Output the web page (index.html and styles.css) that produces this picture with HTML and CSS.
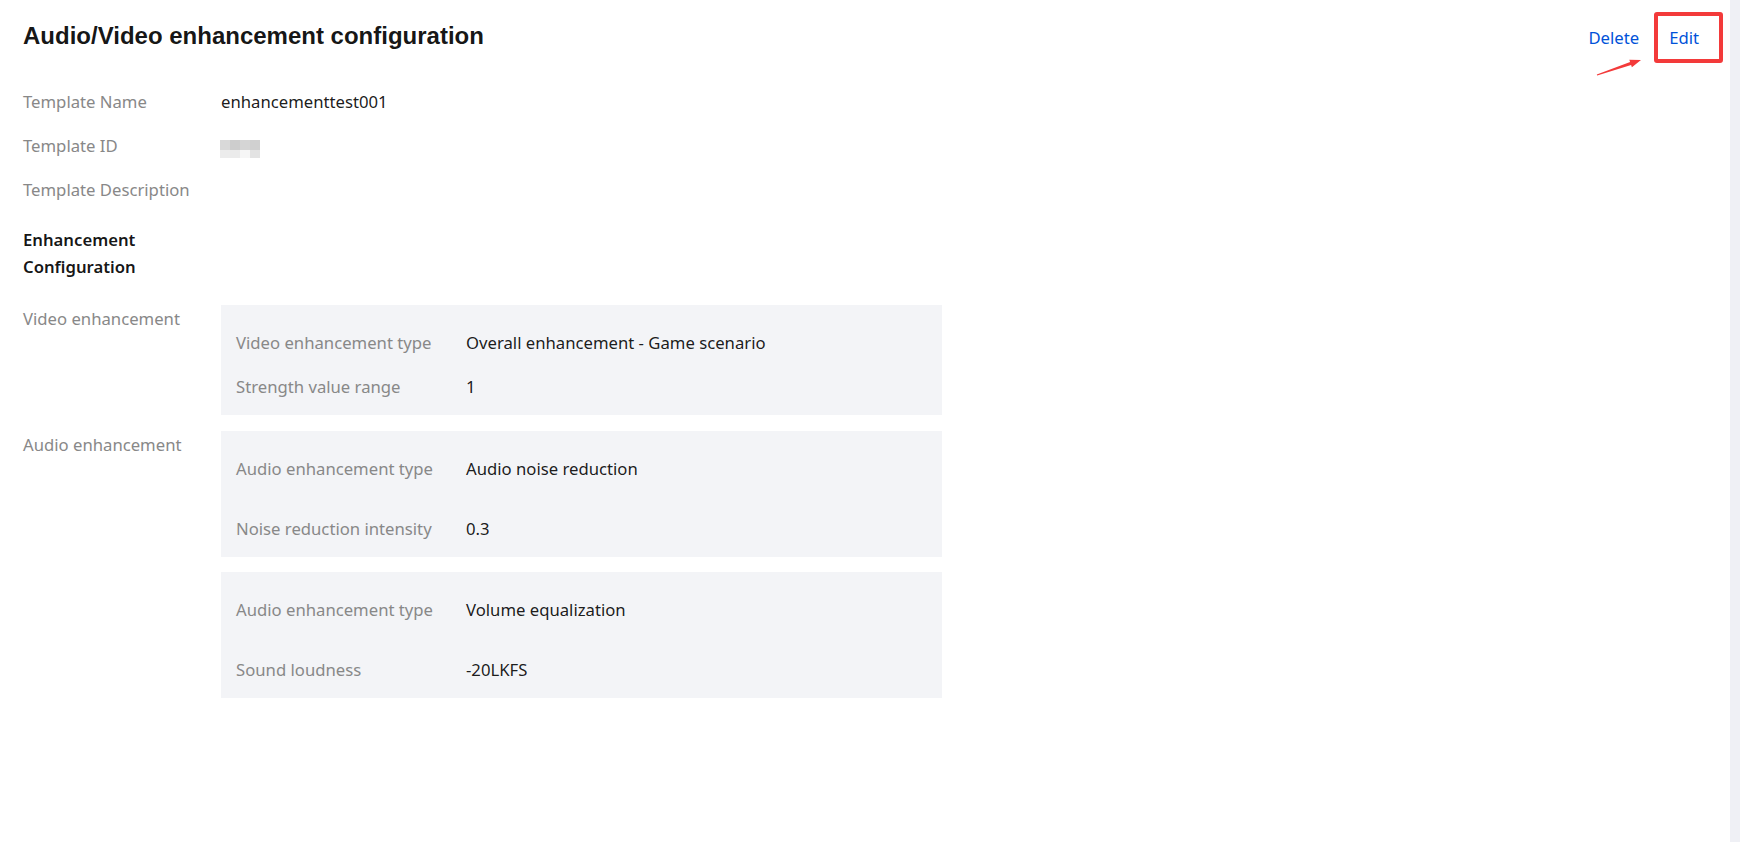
FILE: index.html
```html
<!DOCTYPE html>
<html lang="en">
<head>
<meta charset="utf-8">
<title>Audio/Video enhancement configuration</title>
<link rel="stylesheet" href="styles.css">
</head>
<body>
<div class="layout">
  <main class="page">
    <header class="header">
      <h1 class="title">Audio/Video enhancement configuration</h1>
      <div class="actions">
        <a class="link" href="#">Delete</a>
        <a class="link" href="#">Edit</a>
      </div>
      <span class="annot-box"></span>
      <svg class="annot-arrow" width="50" height="22" viewBox="0 0 50 22" aria-hidden="true">
        <polygon points="2.8,18.4 36.1,6 35.3,3.8 47,4 37.9,11.3 37.1,9.1 3.2,19.6" fill="#f33a3a"/>
      </svg>
    </header>

    <div class="info">
      <div class="row">
        <div class="label">Template Name</div>
        <div class="value">enhancementtest001</div>
      </div>
      <div class="row">
        <div class="label">Template ID</div>
        <div class="value">
          <span class="mosaic"><i class="c1"></i><i class="c2"></i><i class="c3"></i><i class="c4"></i><i class="c5"></i><i class="c6"></i><i class="c7"></i><i class="c8"></i></span>
        </div>
      </div>
      <div class="row">
        <div class="label">Template Description</div>
        <div class="value"></div>
      </div>
      <div class="row row--section">
        <div class="label label--strong">Enhancement Configuration</div>
      </div>
      <div class="row row--group">
        <div class="label label--group">Video enhancement</div>
        <div class="boxes">
          <div class="box">
            <div class="kv"><span class="kv-label">Video enhancement type</span><span class="kv-value">Overall enhancement - Game scenario</span></div>
            <div class="kv"><span class="kv-label">Strength value range</span><span class="kv-value">1</span></div>
          </div>
        </div>
      </div>
      <div class="row row--group row--audio">
        <div class="label label--group">Audio enhancement</div>
        <div class="boxes">
          <div class="box box--tall">
            <div class="kv"><span class="kv-label">Audio enhancement type</span><span class="kv-value">Audio noise reduction</span></div>
            <div class="kv"><span class="kv-label">Noise reduction intensity</span><span class="kv-value">0.3</span></div>
          </div>
          <div class="box box--tall">
            <div class="kv"><span class="kv-label">Audio enhancement type</span><span class="kv-value">Volume equalization</span></div>
            <div class="kv"><span class="kv-label">Sound loudness</span><span class="kv-value">-20LKFS</span></div>
          </div>
        </div>
      </div>
    </div>
  </main>
  <div class="scrollbar"></div>
</div>
</body>
</html>
```

FILE: styles.css
```css
html, body {
  margin: 0;
  padding: 0;
  background: #ffffff;
}

body {
  font-family: "Noto Sans", "Open Sans", sans-serif;
  font-size: 16.7px;
  color: rgba(0, 0, 0, 0.9);
}

.layout {
  display: flex;
  height: 100vh;
  overflow: hidden;
}

.page {
  flex: 1;
  padding: 20px 31px 0 23px;
  min-width: 0;
}

.scrollbar {
  width: 10px;
  flex: none;
  background: #eff0f5;
}

/* header */
.header {
  position: relative;
  display: flex;
  justify-content: space-between;
  align-items: baseline;
}

.title {
  margin: 0;
  font-family: "Liberation Sans", Arial, sans-serif;
  font-size: 24px;
  line-height: 32px;
  font-weight: 700;
  color: rgba(0, 0, 0, 0.92);
}

.actions {
  display: flex;
  gap: 30px;
  line-height: 24px;
}

.link {
  color: #0052d9;
  text-decoration: none;
}

.annot-box {
  position: absolute;
  right: -24px;
  top: -8px;
  width: 69px;
  height: 51px;
  box-sizing: border-box;
  border: 4px solid #f33a3a;
  border-radius: 3px;
}

.annot-arrow {
  position: absolute;
  right: 55px;
  top: 36px;
}

/* info list */
.info {
  margin-top: 28px;
}

.row {
  display: flex;
  padding: 10px 0;
  line-height: 24px;
}

.label {
  width: 198px;
  flex: none;
  padding-right: 20px;
  box-sizing: border-box;
  color: #888888;
}

.value {
  color: rgba(0, 0, 0, 0.9);
}

.label--strong {
  color: rgba(0, 0, 0, 0.92);
  font-weight: 600;
  line-height: 27px;
}

.row--section {
  margin-top: 4px;
  padding: 10px 0 25px;
}

.row--group {
  padding: 0;
}

.label--group {
  padding-top: 2px;
}

.row--audio {
  margin-top: 16px;
}

/* mosaic placeholder for hidden ID */
.mosaic {
  display: inline-grid;
  grid-template-columns: repeat(4, 10px);
  grid-template-rows: 10px 8px;
  vertical-align: top;
  margin-top: 6px;
  margin-left: -1px;
}

.mosaic i { display: block; }
.mosaic .c1 { background: #d9d9d9; }
.mosaic .c2 { background: #cdcdcd; }
.mosaic .c3 { background: #d5d5d5; }
.mosaic .c4 { background: #d0d0d0; }
.mosaic .c5 { background: #ececec; }
.mosaic .c6 { background: #ebebeb; }
.mosaic .c7 { background: #f6f6f6; }
.mosaic .c8 { background: #e3e3e3; }

/* boxes */
.boxes {
  display: flex;
  flex-direction: column;
  gap: 15px;
}

.box {
  width: 721px;
  box-sizing: border-box;
  background: #f3f4f7;
  padding: 16px 15px;
  display: flex;
  flex-direction: column;
  gap: 20px;
}

.box--tall {
  gap: 36px;
}

.kv {
  display: flex;
  line-height: 24px;
}

.kv:first-child {
  margin-top: 10px;
}

.kv-label {
  width: 230px;
  flex: none;
  color: #888888;
}

.kv-value {
  color: rgba(0, 0, 0, 0.9);
}
```
